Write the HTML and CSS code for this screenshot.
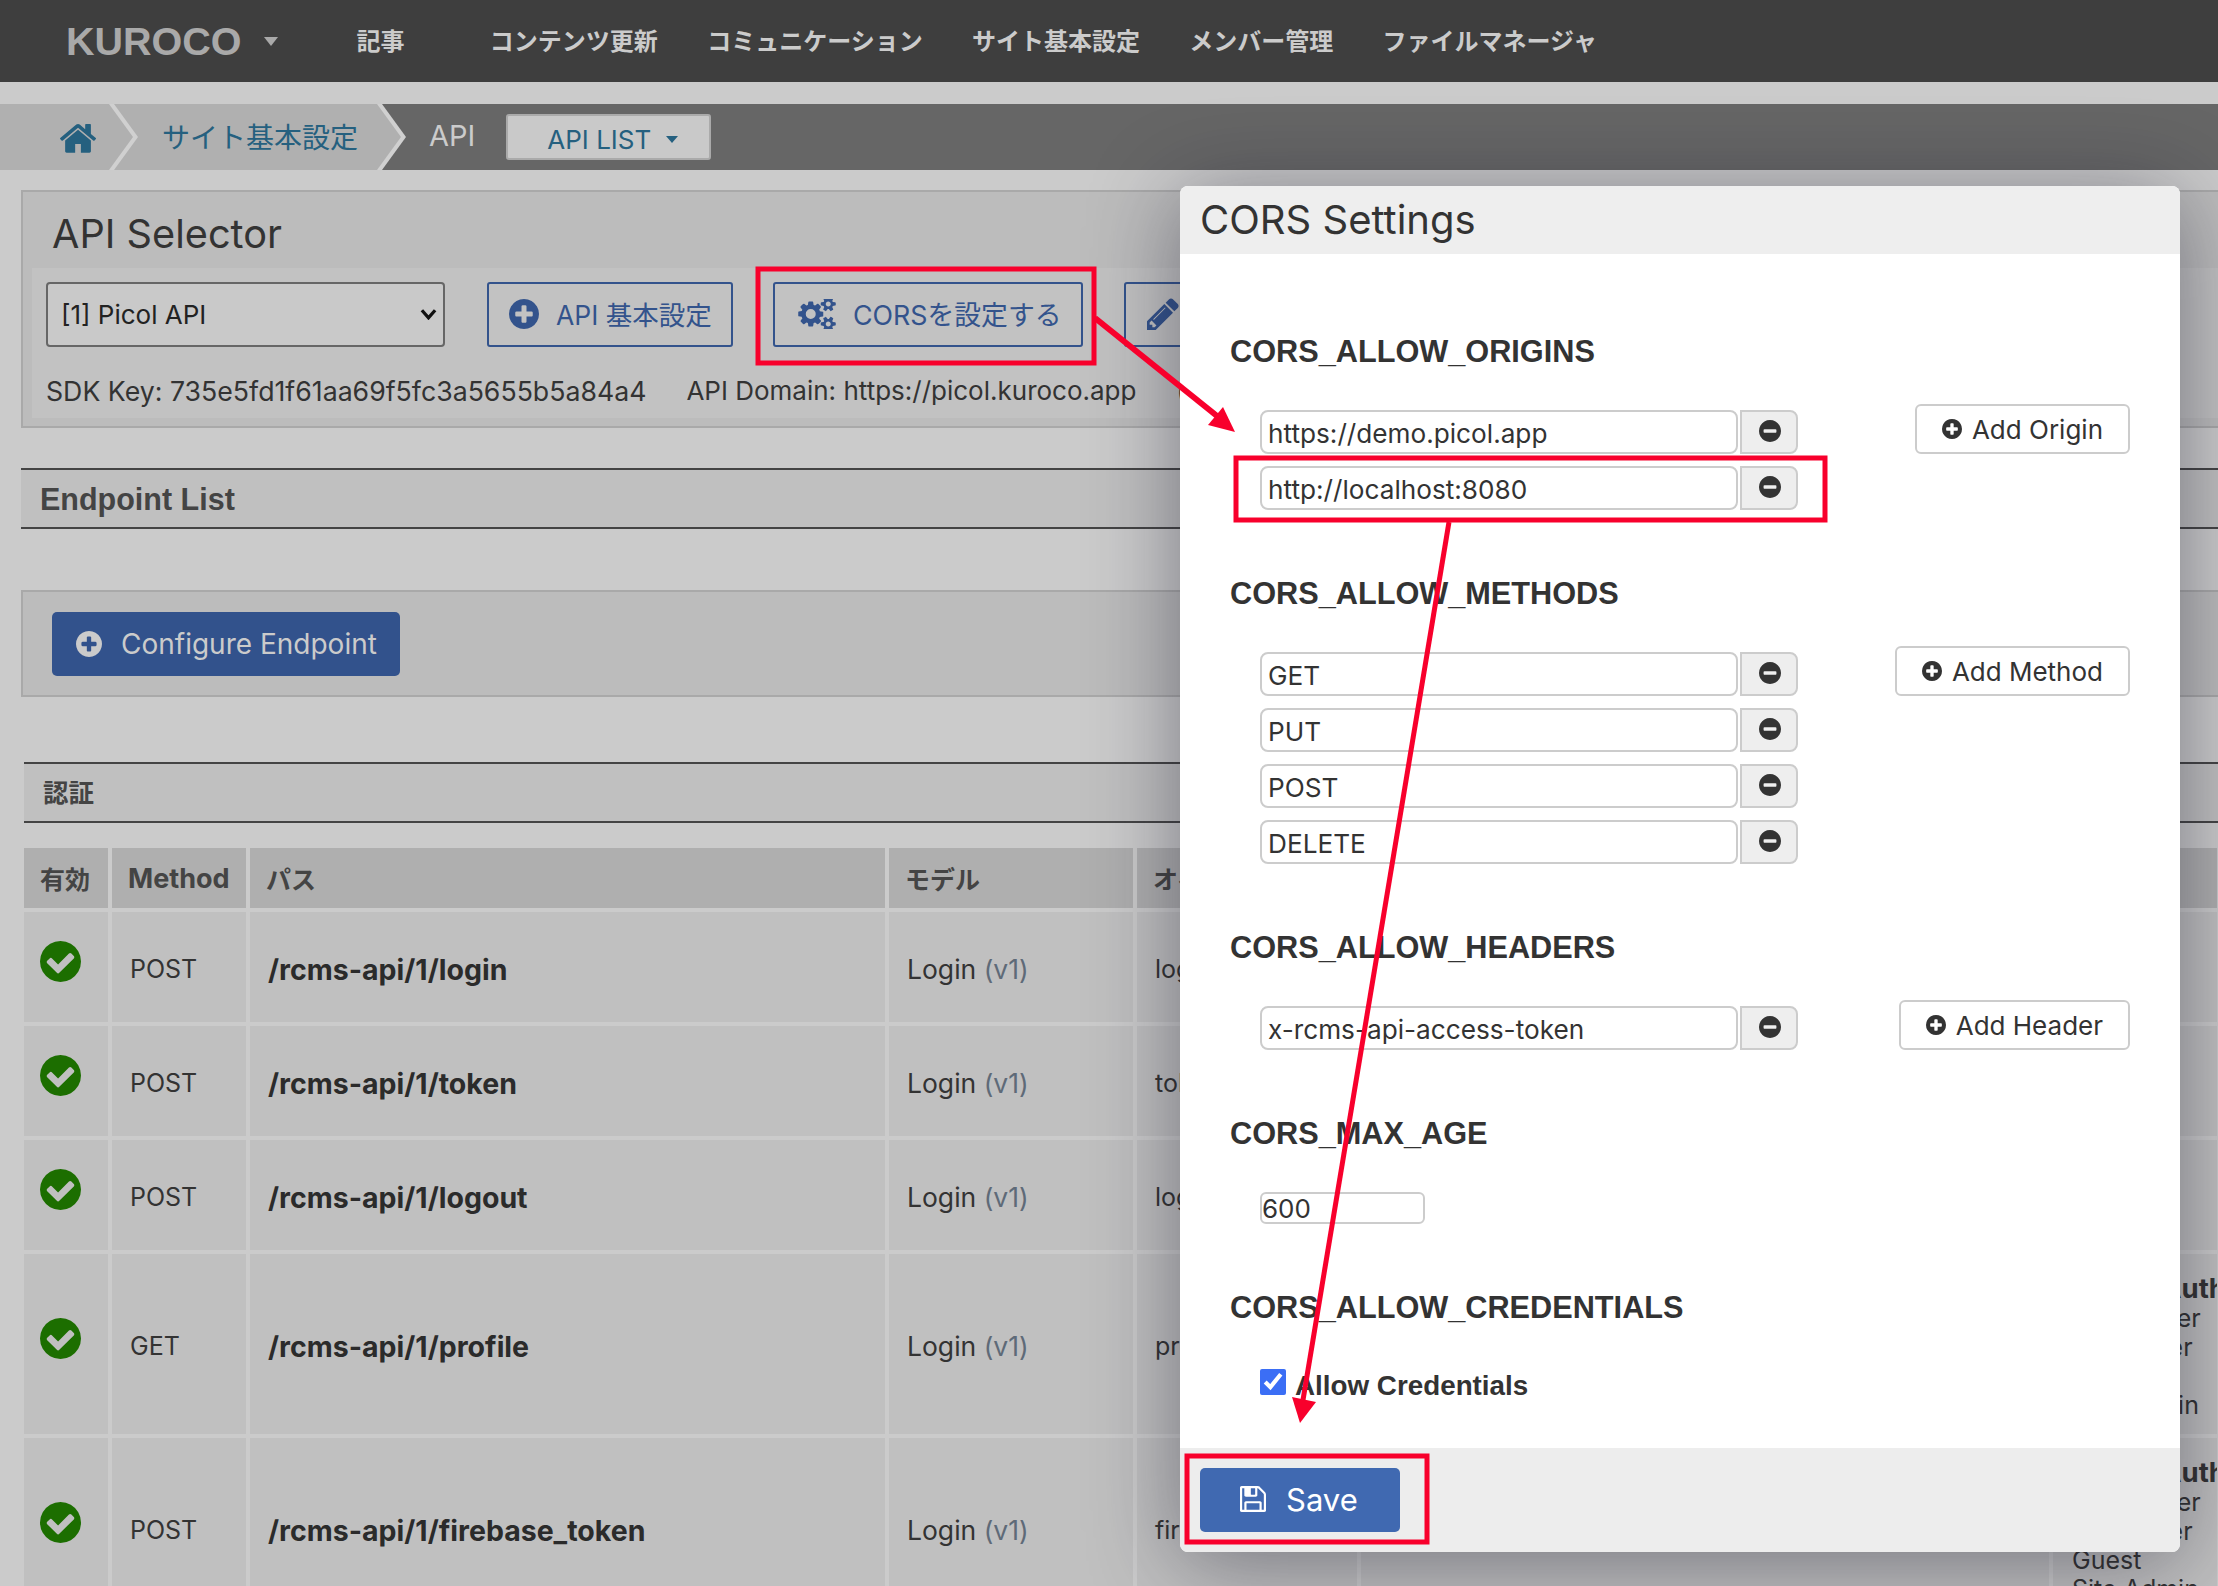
FILE: index.html
```html
<!DOCTYPE html>
<html lang="ja">
<head>
    <meta charset="UTF-8">
    <title>CORS Settings</title>
    <link rel="stylesheet" href="styles.css">
</head>
<body>
    <svg class="icon-defs" xmlns="http://www.w3.org/2000/svg">
        <symbol id="i-plus" viewBox="128 128 1536 1536"><path d="M1344 960v-128q0-26-19-45t-45-19h-256v-256q0-26-19-45t-45-19h-128q-26 0-45 19t-19 45v256h-256q-26 0-45 19t-19 45v128q0 26 19 45t45 19h256v256q0 26 19 45t45 19h128q26 0 45-19t19-45v-256h256q26 0 45-19t19-45zm320-64q0 209-103 385.5t-279.5 279.5-385.5 103-385.5-103-279.5-279.5-103-385.5 103-385.5 279.5-279.5 385.5-103 385.5 103 279.5 279.5 103 385.5z"/></symbol>
        <symbol id="i-minus" viewBox="128 128 1536 1536"><path d="M1344 960v-128q0-26-19-45t-45-19h-768q-26 0-45 19t-19 45v128q0 26 19 45t45 19h768q26 0 45-19t19-45zm320-64q0 209-103 385.5t-279.5 279.5-385.5 103-385.5-103-279.5-279.5-103-385.5 103-385.5 279.5-279.5 385.5-103 385.5 103 279.5 279.5 103 385.5z"/></symbol>
        <symbol id="i-check" viewBox="128 128 1536 1536"><path d="M1412 734q0-28-18-46l-91-90q-19-19-45-19t-45 19l-408 407-226-226q-19-19-45-19t-45 19l-91 90q-18 18-18 46 0 27 18 45l362 362q19 19 45 19 27 0 46-19l543-543q18-18 18-45zm252 162q0 209-103 385.5t-279.5 279.5-385.5 103-385.5-103-279.5-279.5-103-385.5 103-385.5 279.5-279.5 385.5-103 385.5 103 279.5 279.5 103 385.5z"/></symbol>
    </svg>

    <nav class="topbar">
        <span class="logo">KUROCO</span>
        <span class="caret caret-logo"></span>
        <ul class="topnav">
            <li class="topnav-first">記事</li>
            <li>コンテンツ更新</li>
            <li>コミュニケーション</li>
            <li>サイト基本設定</li>
            <li>メンバー管理</li>
            <li>ファイルマネージャ</li>
        </ul>
    </nav>

    <div class="crumbs">
        <div class="crumb crumb-home">
            <div class="crumb-in">
                <svg class="home-icon" viewBox="90 130 1610 1410"><path d="M1472 992v480q0 26-19 45t-45 19h-384v-384h-256v384h-384q-26 0-45-19t-19-45v-480q0-1 .5-3t.5-3l575-474 575 474q1 2 1 6zm223-69l-62 74q-8 9-21 11h-3q-13 0-21-7l-692-577-692 577q-12 8-24 7-13-2-21-11l-62-74q-8-10-7-23.5t11-21.5l719-599q32-26 76-26t76 26l244 204v-195q0-14 9-23t23-9h192q14 0 23 9t9 23v408l219 182q10 8 11 21.5t-7 23.5z"/></svg>
            </div>
        </div>
        <div class="crumb crumb-site">
            <div class="crumb-in">サイト基本設定</div>
        </div>
        <span class="crumb-current">API</span>
        <button class="list-btn">API LIST<span class="caret caret-list"></span></button>
    </div>

    <section class="panel selector">
        <h2 class="selector-title">API Selector</h2>
        <div class="selector-strip">
            <div class="selector-controls">
                <div class="select-wrap">
                    <select class="api-select">
                        <option>[1] Picol API</option>
                    </select>
                    <svg class="select-arrow" viewBox="0 0 18 12"><polyline points="2,2 9,10 16,2"/></svg>
                </div>
                <button class="outline-btn btn-basic">
                    <svg class="btn-icon"><use href="#i-plus"/></svg>API 基本設定
                </button>
                <button class="outline-btn btn-cors">
                    <svg class="btn-icon cogs" viewBox="0 128 1920 1536"><path d="M896 896q0-106-75-181t-181-75-181 75-75 181 75 181 181 75 181-75 75-181zm768 512q0-52-38-90t-90-38-90 38-38 90q0 53 37.5 90.5t90.5 37.5 90.5-37.5 37.5-90.5zm0-1024q0-52-38-90t-90-38-90 38-38 90q0 53 37.5 90.5t90.5 37.5 90.5-37.5 37.5-90.5zm-384 421v185q0 10-7 19.5t-16 10.5l-155 24q-11 35-32 76 34 48 90 115 7 11 7 20 0 12-7 19-23 30-82.5 89.5t-78.5 59.5q-11 0-21-7l-115-90q-37 19-77 31-11 108-23 155-7 24-30 24h-186q-11 0-20-7.5t-10-17.5l-23-153q-34-10-75-31l-118 89q-7 7-20 7-11 0-21-8-144-133-144-160 0-9 7-19 10-14 41-53t47-61q-23-44-35-82l-152-24q-10-1-17-9.5t-7-19.5v-185q0-10 7-19.5t16-10.5l155-24q11-35 32-76-34-48-90-115-7-11-7-20 0-12 7-20 22-30 82-89t79-59q11 0 21 7l115 90q34-18 77-32 11-108 23-154 7-24 30-24h186q11 0 20 7.5t10 17.5l23 153q34 10 75 31l118-89q8-7 20-7 11 0 21 8 144 133 144 160 0 8-7 19-12 16-42 54t-45 60q23 48 34 82l152 23q10 2 17 10.5t7 19.5zm640 533v140q0 16-149 31-12 27-30 52 51 113 51 138 0 4-4 7-122 71-124 71-8 0-46-47t-52-68q-20 2-30 2t-30-2q-14 21-52 68t-46 47q-2 0-124-71-4-3-4-7 0-25 51-138-18-25-30-52-149-15-149-31v-140q0-16 149-31 13-29 30-52-51-113-51-138 0-4 4-7 4-2 35-20t59-34 30-16q8 0 46 46.5t52 67.5q20-2 30-2t30 2q51-71 92-112l6-2q4 0 124 70 4 3 4 7 0 25-51 138 17 23 30 52 149 15 149 31zm0-1024v140q0 16-149 31-12 27-30 52 51 113 51 138 0 4-4 7-122 71-124 71-8 0-46-47t-52-68q-20 2-30 2t-30-2q-14 21-52 68t-46 47q-2 0-124-71-4-3-4-7 0-25 51-138-18-25-30-52-149-15-149-31v-140q0-16 149-31 13-29 30-52-51-113-51-138 0-4 4-7 4-2 35-20t59-34 30-16q8 0 46 46.5t52 67.5q20-2 30-2t30 2q51-71 92-112l6-2q4 0 124 70 4 3 4 7 0 25-51 138 17 23 30 52 149 15 149 31z"/></svg>CORSを設定する
                </button>
                <button class="outline-btn btn-edit">
                    <svg class="btn-icon pencil" viewBox="128 128 1536 1536"><path d="M491 1536l91-91-235-235-91 91v107h128v128h107zm523-928q0-22-22-22-10 0-17 7l-542 542q-7 7-7 17 0 22 22 22 10 0 17-7l542-542q7-7 7-17zm-54-192l416 416-832 832h-416v-416zm683 96q0 53-37 90l-166 166-416-416 166-165q36-38 90-38 53 0 91 38l235 234q37 39 37 91z"/></svg>
                </button>
            </div>
            <p class="selector-info">
                <span class="sdk-key">SDK Key: 735e5fd1f61aa69f5fc3a5655b5a84a4</span>
                <span class="api-domain">API Domain: https://picol.kuroco.app</span>
                <span>(</span>
            </p>
        </div>
    </section>

    <h3 class="band band-endpoints">Endpoint List</h3>

    <section class="panel configure">
        <button class="solid-btn btn-configure">
            <svg class="btn-icon"><use href="#i-plus"/></svg>Configure Endpoint
        </button>
    </section>

    <h3 class="band band-auth">認証</h3>

    <table class="endpoints">
        <colgroup>
            <col class="col-on">
            <col class="col-method">
            <col class="col-path">
            <col class="col-model">
            <col class="col-op">
            <col class="col-desc">
            <col class="col-roles">
        </colgroup>
        <thead>
            <tr>
                <th>有効</th>
                <th class="th-latin">Method</th>
                <th>パス</th>
                <th>モデル</th>
                <th>オペレーション</th>
                <th></th>
                <th></th>
            </tr>
        </thead>
        <tbody>
            <tr class="row-short">
                <td><svg class="on-icon"><use href="#i-check"/></svg></td>
                <td>POST</td>
                <td class="path">/rcms-api/1/login</td>
                <td class="model">Login <span class="ver">(v1)</span></td>
                <td>login</td>
                <td></td>
                <td></td>
            </tr>
            <tr class="row-short">
                <td><svg class="on-icon"><use href="#i-check"/></svg></td>
                <td>POST</td>
                <td class="path">/rcms-api/1/token</td>
                <td class="model">Login <span class="ver">(v1)</span></td>
                <td>token</td>
                <td></td>
                <td></td>
            </tr>
            <tr class="row-short">
                <td><svg class="on-icon"><use href="#i-check"/></svg></td>
                <td>POST</td>
                <td class="path">/rcms-api/1/logout</td>
                <td class="model">Login <span class="ver">(v1)</span></td>
                <td>logout</td>
                <td></td>
                <td></td>
            </tr>
            <tr>
                <td><svg class="on-icon"><use href="#i-check"/></svg></td>
                <td>GET</td>
                <td class="path">/rcms-api/1/profile</td>
                <td class="model">Login <span class="ver">(v1)</span></td>
                <td>profile</td>
                <td></td>
                <td class="roles"><b>Group Auth</b>Subscriber<br>Developer<br>Guest<br>Site Admin</td>
            </tr>
            <tr>
                <td><svg class="on-icon"><use href="#i-check"/></svg></td>
                <td>POST</td>
                <td class="path">/rcms-api/1/firebase_token</td>
                <td class="model">Login <span class="ver">(v1)</span></td>
                <td>firebase_token</td>
                <td></td>
                <td class="roles"><b>Group Auth</b>Subscriber<br>Developer<br>Guest<br>Site Admin</td>
            </tr>
        </tbody>
    </table>

    <div class="modal">
        <header class="modal-head">CORS Settings</header>
        <div class="modal-body">
            <section class="cors-section">
                <h4>CORS_ALLOW_ORIGINS</h4>
                <div class="cors-row">
                    <div class="value-list">
                        <div class="value"><input type="text" value="https://demo.picol.app"><button class="remove-btn"><svg><use href="#i-minus"/></svg></button></div>
                        <div class="value"><input type="text" value="http://localhost:8080"><button class="remove-btn"><svg><use href="#i-minus"/></svg></button></div>
                    </div>
                    <button class="add-btn"><svg><use href="#i-plus"/></svg>Add Origin</button>
                </div>
            </section>
            <section class="cors-section">
                <h4>CORS_ALLOW_METHODS</h4>
                <div class="cors-row">
                    <div class="value-list">
                        <div class="value"><input type="text" value="GET"><button class="remove-btn"><svg><use href="#i-minus"/></svg></button></div>
                        <div class="value"><input type="text" value="PUT"><button class="remove-btn"><svg><use href="#i-minus"/></svg></button></div>
                        <div class="value"><input type="text" value="POST"><button class="remove-btn"><svg><use href="#i-minus"/></svg></button></div>
                        <div class="value"><input type="text" value="DELETE"><button class="remove-btn"><svg><use href="#i-minus"/></svg></button></div>
                    </div>
                    <button class="add-btn"><svg><use href="#i-plus"/></svg>Add Method</button>
                </div>
            </section>
            <section class="cors-section">
                <h4>CORS_ALLOW_HEADERS</h4>
                <div class="cors-row">
                    <div class="value-list">
                        <div class="value"><input type="text" value="x-rcms-api-access-token"><button class="remove-btn"><svg><use href="#i-minus"/></svg></button></div>
                    </div>
                    <button class="add-btn"><svg><use href="#i-plus"/></svg>Add Header</button>
                </div>
            </section>
            <section class="cors-section">
                <h4>CORS_MAX_AGE</h4>
                <div class="cors-row">
                    <input class="age-input" type="text" value="600">
                </div>
            </section>
            <section class="cors-section">
                <h4>CORS_ALLOW_CREDENTIALS</h4>
                <label class="cred-label"><input type="checkbox" checked>Allow Credentials</label>
            </section>
        </div>
        <footer class="modal-foot">
            <button class="save-btn">
                <svg class="save-icon" viewBox="128 128 1536 1536"><path d="M512 1536h768v-384h-768v384zm896 0h128v-896q0-14-10-38.5t-20-34.5l-281-281q-10-10-34-20t-39-10v416q0 40-28 68t-68 28h-576q-40 0-68-28t-28-68v-416h-128v1280h128v-416q0-40 28-68t68-28h832q40 0 68 28t28 68v416zm-384-928v-320q0-13-9.5-22.5t-22.5-9.5h-192q-13 0-22.5 9.5t-9.5 22.5v320q0 13 9.5 22.5t22.5 9.5h192q13 0 22.5-9.5t9.5-22.5zm640 32v928q0 40-28 68t-68 28h-1344q-40 0-68-28t-28-68v-1344q0-40 28-68t68-28h928q40 0 88 20t76 48l280 280q28 28 48 76t20 88z"/></svg>Save
            </button>
        </footer>
    </div>

    <!-- red annotations drawn over the screenshot -->
    <svg class="marks" viewBox="0 0 2218 1586" xmlns="http://www.w3.org/2000/svg">
        <rect x="758" y="269" width="336" height="94"/>
        <rect x="1236" y="458" width="589" height="62"/>
        <rect x="1187" y="1456" width="240" height="86"/>
        <line x1="1095" y1="318" x2="1222" y2="420"/>
        <polygon points="1235,432 1208,425 1223,407"/>
        <line class="thin" x1="1449" y1="522" x2="1303" y2="1400"/>
        <polygon points="1300,1423 1292,1397 1316,1402"/>
    </svg>
</body>
</html>
```

FILE: styles.css
```css
html, body {
    height: 1586px;
    overflow: hidden;
}
body {
    position: relative;
    margin: 0;
    background-color: #cbcbcb;
    color: #333;
    font-family: Inter, "Noto Sans CJK JP", sans-serif;
    font-size: 25px;
}
button, input, select {
    font-family: inherit;
}
.icon-defs {
    display: none;
}

/* top bar */
.topbar {
    display: flex;
    align-items: center;
    height: 82px;
    padding-left: 66px;
    background-color: #3e3e3e;
    color: #cbcbcb;
}
.logo {
    font-family: "Liberation Sans", sans-serif;
    font-size: 39.5px;
    font-weight: bold;
    color: #a9a9a9;
}
.caret {
    display: inline-block;
    width: 0;
    height: 0;
    border-left: 7px solid transparent;
    border-right: 7px solid transparent;
    border-top: 9px solid currentColor;
}
.caret-logo {
    margin-left: 22px;
    color: #a9a9a9;
}
.topnav {
    display: flex;
    gap: 49.3px;
    margin: -3px 0 0 79px;
    padding: 0;
    list-style: none;
    font-size: 24px;
    font-weight: bold;
}
.topnav-first {
    width: 84px;
}

/* breadcrumb */
.crumbs {
    display: flex;
    align-items: center;
    height: 66px;
    margin-top: 22px;
    background-color: #666;
    font-size: 28px;
}
.crumb {
    position: relative;
    height: 100%;
    background-color: #d0d0d0;
    clip-path: polygon(0 0, calc(100% - 24px) 0, 100% 50%, calc(100% - 24px) 100%, 0 100%);
}
.crumb-in {
    display: flex;
    align-items: center;
    height: 100%;
    margin-right: 5px;
    padding-bottom: 3px;
    box-sizing: border-box;
    background-color: #b0b0b0;
    color: #25607f;
    clip-path: polygon(0 0, calc(100% - 24px) 0, 100% 50%, calc(100% - 24px) 100%, 0 100%);
}
.crumb-home {
    z-index: 1;
    width: 138px;
}
.crumb-site {
    width: 292px;
    margin-left: -24px;
}
.crumb-site .crumb-in {
    padding-left: 48px;
}
.home-icon {
    width: 36px;
    height: 32px;
    margin: 3px 0 0 60px;
    fill: #25607f;
}
.crumb-current {
    margin: -3px 0 0 23px;
    color: #cbcbcb;
    font-size: 29px;
}
.list-btn {
    display: flex;
    align-items: center;
    justify-content: center;
    width: 205px;
    height: 46px;
    margin-left: 31px;
    padding: 4px 0 0 8px;
    border: 2px solid #aaa;
    border-radius: 3px;
    background-color: #c9c9c9;
    color: #25607f;
    font-size: 26px;
}
.caret-list {
    margin-left: 15px;
    border-left-width: 6px;
    border-right-width: 6px;
    border-top-width: 7px;
}

/* panels */
.panel {
    box-sizing: border-box;
    margin-left: 21px;
    margin-right: -40px;
    border: 2px solid #a9a9a9;
    background-color: #bcbcbc;
}
.selector {
    height: 238px;
    margin-top: 20px;
    padding: 0 9px;
}
.selector-title {
    height: 76px;
    margin: 0;
    padding-left: 20px;
    font-size: 39.7px;
    font-weight: normal;
    line-height: 84px;
}
.selector-strip {
    height: 150px;
    padding: 14px 14px 0;
    box-sizing: border-box;
    background-color: #c2c2c2;
}
.selector-controls {
    display: flex;
    height: 65px;
}
.select-wrap {
    position: relative;
    width: 399px;
    height: 65px;
}
.api-select {
    appearance: none;
    box-sizing: border-box;
    width: 100%;
    height: 65px;
    padding-left: 13px;
    border: 2px solid #666;
    border-radius: 4px;
    background-color: #c9c9c9;
    color: #222;
    font-size: 26px;
}
.select-arrow {
    position: absolute;
    right: 8px;
    top: 26px;
    width: 17px;
    height: 12px;
    fill: none;
    stroke: #111;
    stroke-width: 3.5;
}
.outline-btn {
    display: flex;
    align-items: center;
    box-sizing: border-box;
    height: 65px;
    padding-bottom: 3px;
    border: 2px solid #33538c;
    border-radius: 3px;
    background: transparent;
    color: #33538c;
    font-size: 26.5px;
    white-space: nowrap;
}
.btn-icon {
    width: 30px;
    height: 30px;
    fill: currentColor;
}
.btn-basic {
    width: 246px;
    margin-left: 42px;
    padding-left: 20px;
}
.btn-basic .btn-icon {
    margin-right: 17px;
}
.btn-cors {
    width: 310px;
    margin-left: 40px;
    padding-left: 22px;
    font-size: 26.8px;
}
.cogs {
    width: 40px;
    margin-right: 16px;
}
.btn-edit {
    width: 300px;
    margin-left: 41px;
    padding-left: 21px;
}
.pencil {
    width: 32px;
    height: 32px;
}
.selector-info {
    display: flex;
    gap: 40px;
    margin: 28px 0 0;
    font-size: 26px;
    line-height: 32px;
    white-space: nowrap;
}
.sdk-key {
    font-size: 26.7px;
}

.band {
    display: block;
    box-sizing: border-box;
    height: 61px;
    margin: 0 0 0 21px;
    padding-left: 19px;
    border-top: 2px solid #444;
    border-bottom: 2px solid #444;
    background-color: #c0c0c0;
    color: #444;
    font-family: "Liberation Sans", "Noto Sans CJK JP", sans-serif;
    font-size: 30.5px;
    line-height: 59px;
}
.band-endpoints {
    margin-top: 40px;
}
.band-auth {
    margin-top: 65px;
    margin-left: 24px;
    font-size: 25.5px;
}
.configure {
    height: 107px;
    margin-top: 61px;
    padding: 20px 29px;
}
.solid-btn {
    display: flex;
    align-items: center;
    box-sizing: border-box;
    width: 348px;
    height: 64px;
    padding-left: 24px;
    border: none;
    border-radius: 5px;
    background-color: #32528c;
    color: #cbcbcb;
    font-size: 28px;
    white-space: nowrap;
}
.btn-configure .btn-icon {
    width: 26px;
    height: 26px;
    margin-right: 19px;
}

/* endpoint table */
.endpoints {
    margin: 21px 0 0 20px;
    width: 2201px;
    border-collapse: separate;
    border-spacing: 4px;
    table-layout: fixed;
    font-size: 25px;
}
.col-on { width: 84px; }
.col-method { width: 134px; }
.col-path { width: 635px; }
.col-model { width: 244px; }
.col-op { width: 220px; }
.col-desc { width: 688px; }
.col-roles { width: 164px; }
.endpoints th {
    height: 60px;
    padding: 0 0 0 16px;
    background-color: #afafaf;
    color: #444;
    font-size: 25px;
    text-align: left;
    white-space: nowrap;
    overflow: hidden;
}
.endpoints th.th-latin {
    font-size: 27px;
}
.endpoints td {
    padding: 4px 0 0 18px;
    background-color: #c0c0c0;
    white-space: nowrap;
    overflow: hidden;
}
.row-short td {
    height: 106px;
}
.endpoints td.path {
    font-size: 28.5px;
    font-weight: bold;
    color: #2b2b2b;
}
.endpoints td.model {
    font-size: 26.5px;
}
.ver {
    color: #5e6a78;
}
.endpoints td.roles {
    height: 146px;
    padding: 19.5px 0 14.5px 19px;
    line-height: 29px;
}
.roles b {
    display: block;
    margin-bottom: 1px;
    font-size: 27.5px;
}
.on-icon {
    display: block;
    width: 41px;
    height: 41px;
    margin: -16px 0 0 -2px;
    fill: #1c6e00;
}

/* CORS settings modal */
.modal {
    position: absolute;
    left: 1180px;
    top: 186px;
    display: flex;
    flex-direction: column;
    width: 1000px;
    height: 1366px;
    border-radius: 8px;
    background-color: #fff;
    box-shadow: 0 10px 90px rgba(20, 20, 40, 0.45);
    overflow: hidden;
}
.modal-head {
    height: 68px;
    padding-left: 20px;
    background-color: #eee;
    font-size: 40px;
    line-height: 68px;
}
.modal-body {
    flex: 1;
    min-height: 0;
    padding: 77px 50px 0;
}
.cors-section {
    margin-bottom: 63px;
}
.cors-section:last-child {
    margin-bottom: 0;
}
.cors-section h4 {
    margin: 0 0 37px;
    font-family: "Liberation Sans", sans-serif;
    font-size: 30.7px;
    line-height: 42px;
}
.cors-row {
    display: flex;
    justify-content: space-between;
    padding-left: 30px;
}
.value-list {
    display: flex;
    flex-direction: column;
    gap: 12px;
}
.value {
    display: flex;
    gap: 2px;
}
.value input {
    box-sizing: border-box;
    width: 478px;
    height: 44px;
    padding: 2px 6px 0;
    border: 2px solid #ccc;
    border-radius: 8px;
    color: #333;
    font-size: 26.2px;
}
.remove-btn {
    display: flex;
    align-items: center;
    justify-content: center;
    box-sizing: border-box;
    width: 58px;
    height: 44px;
    padding: 0 0 2px 2px;
    border: 2px solid #ccc;
    border-radius: 0 8px 8px 0;
    background-color: #eee;
}
.remove-btn svg {
    width: 22px;
    height: 22px;
    fill: #333;
}
.add-btn {
    display: flex;
    align-items: center;
    box-sizing: border-box;
    height: 50px;
    margin-top: -6px;
    padding: 0 25px;
    border: 2px solid #ccc;
    border-radius: 6px;
    background-color: #fff;
    color: #333;
    font-size: 26px;
}
.add-btn svg {
    width: 20px;
    height: 20px;
    margin-right: 10px;
    fill: #333;
}
.age-input {
    box-sizing: border-box;
    width: 165px;
    height: 32px;
    padding: 1px 0 0;
    border: 2px solid #ccc;
    border-radius: 6px;
    color: #333;
    font-size: 26px;
}
.cred-label {
    display: flex;
    align-items: center;
    margin-left: 30px;
    padding-top: 4px;
    font-family: "Liberation Sans", sans-serif;
    font-size: 27.8px;
    font-weight: bold;
}
.cred-label input {
    width: 26px;
    height: 26px;
    margin: -8px 9px 0 0;
    accent-color: #3b6ef5;
}
.modal-foot {
    box-sizing: border-box;
    height: 104px;
    padding: 20px;
    background-color: #ededed;
}
.save-btn {
    display: flex;
    align-items: center;
    box-sizing: border-box;
    width: 200px;
    height: 64px;
    padding: 0 0 2px 40px;
    border: none;
    border-radius: 5px;
    background-color: #4069b1;
    color: #fff;
    font-size: 31px;
}
.save-icon {
    width: 26px;
    height: 26px;
    margin-right: 20px;
    fill: #fff;
}

/* annotations */
.marks {
    position: absolute;
    left: 0;
    top: 0;
    width: 2218px;
    height: 1586px;
    pointer-events: none;
}
.marks rect {
    fill: none;
    stroke: #f8002c;
    stroke-width: 5;
}
.marks line {
    stroke: #f8002c;
    stroke-width: 6;
}
.marks line.thin {
    stroke-width: 5;
}
.marks polygon {
    fill: #f8002c;
}
```
